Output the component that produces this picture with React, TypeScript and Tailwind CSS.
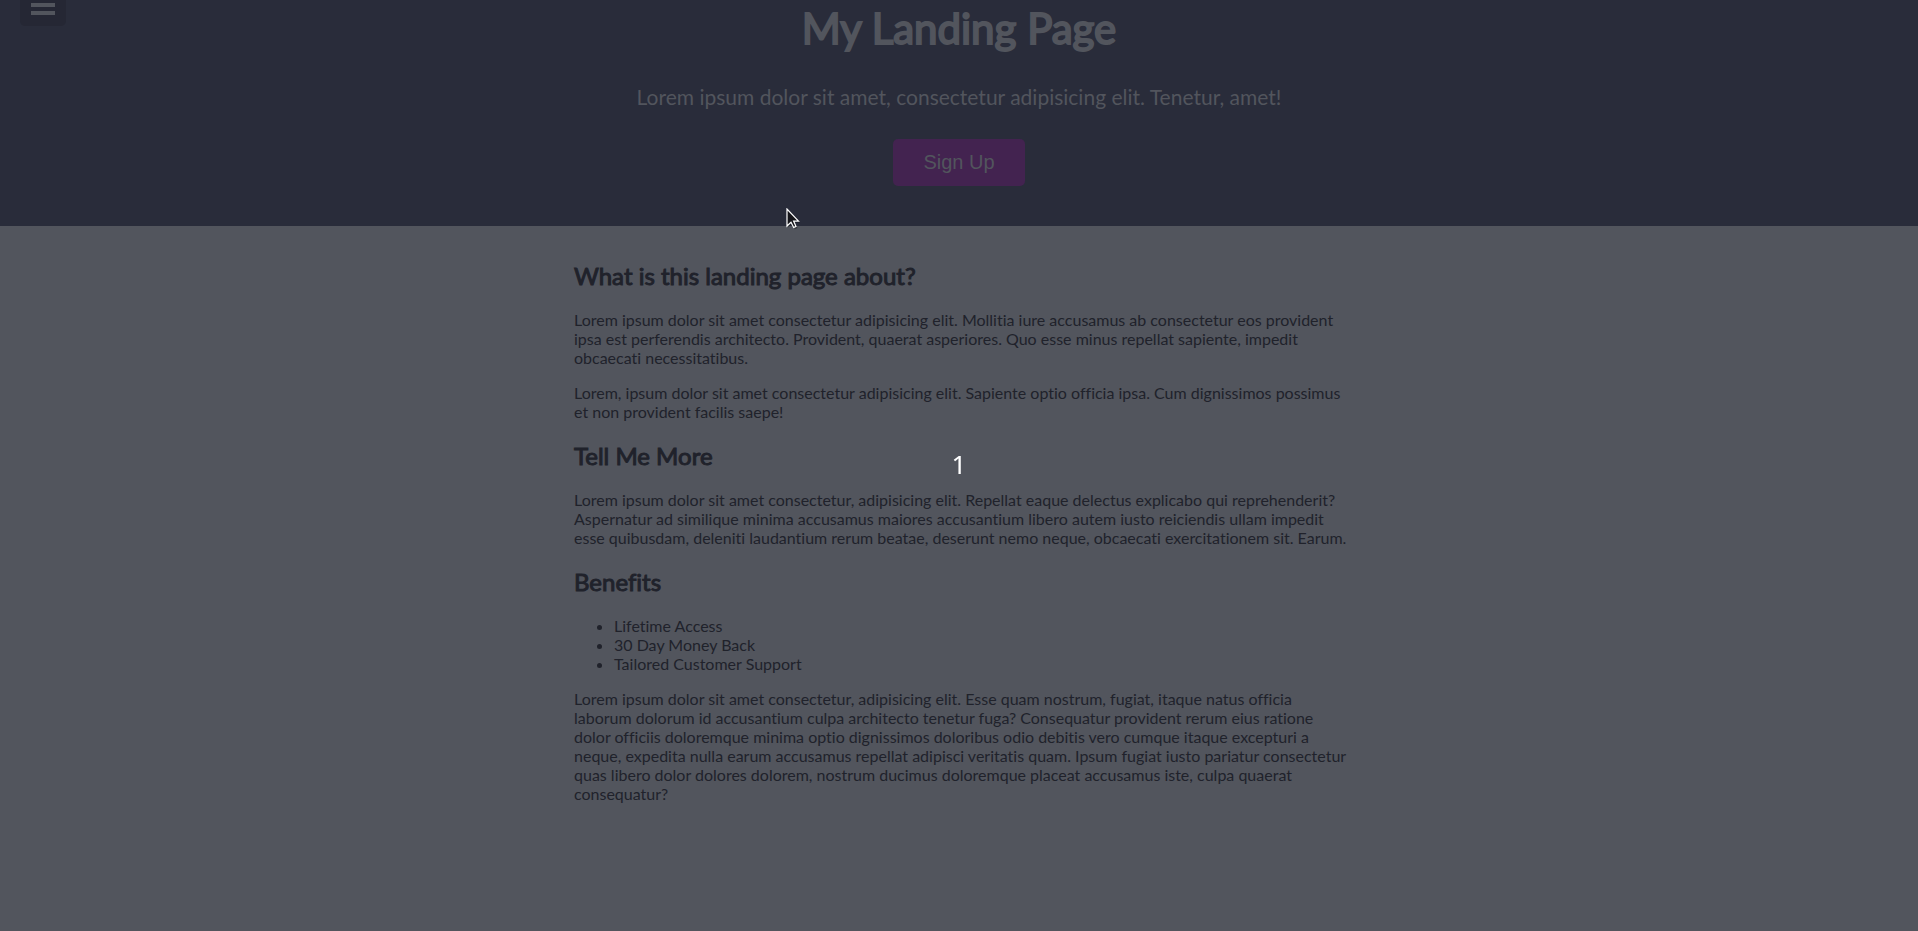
const benefits = ['Lifetime Access', '30 Day Money Back', 'Tailored Customer Support'];

function SectionTitle({ children }: { children: string }) {
  return (
    <h2 className="my-5 text-[24px] leading-[29px] font-normal [-webkit-text-stroke:1px_#20222b]">{children}</h2>
  );
}

function Cursor() {
  return (
    <svg className="pointer-events-none absolute top-[208px] left-[786px]" width="16" height="22" viewBox="0 0 16 22" aria-hidden="true">
      <path d="M1 1v17.5l4-3.8 2.9 5.6 2.6-1.3-2.6-5.5h5.2z" fill="#000" opacity=".35" transform="translate(1 1)" />
      <path d="M1 1v17l4-3.8 2.7 5.3 2.3-1.1-2.4-5.3h4.9z" fill="#15151a" stroke="#fff" strokeWidth="1.2" />
    </svg>
  );
}

export default function App() {
  return (
    <div className="relative min-h-screen overflow-hidden bg-[#52555d] font-['Lato',sans-serif] text-[16px] leading-[19px] text-[#20222b] [font-variant-ligatures:none]">
      <header className="relative flex flex-col items-center bg-[#292c3a] pb-10 text-center text-[#52555d]">
        <button
          type="button"
          aria-label="Toggle navigation"
          className="absolute top-0 left-5 flex h-[26px] w-[46px] flex-col items-center gap-1 rounded-b-[5px] bg-[#252734] pt-[3px]"
        >
          <span className="h-1 w-6 bg-[#52555d]" />
          <span className="h-1 w-6 bg-[#52555d]" />
        </button>
        <h1 className="pt-0.5 text-[42px] leading-[52px] font-normal [-webkit-text-stroke:2px_#52555d]">My Landing Page</h1>
        <p className="my-[30px] text-[21px] leading-[25px]">
          Lorem ipsum dolor sit amet, consectetur adipisicing elit. Tenetur, amet!
        </p>
        <button type="button" className="rounded-[5px] bg-[#432350] px-[30px] py-3 font-['Liberation_Sans',sans-serif] text-[20px] leading-[23px]">
          Sign Up
        </button>
      </header>
      <main className="mx-auto max-w-[800px] pt-[15px] pr-[7px] pl-[15px]">
        <SectionTitle>What is this landing page about?</SectionTitle>
        <p className="my-4">
          Lorem ipsum dolor sit amet consectetur adipisicing elit. Mollitia iure accusamus ab consectetur eos provident
          ipsa est perferendis architecto. Provident, quaerat asperiores. Quo esse minus repellat sapiente, impedit
          obcaecati necessitatibus.
        </p>
        <p className="my-4">
          Lorem, ipsum dolor sit amet consectetur adipisicing elit. Sapiente optio officia ipsa. Cum dignissimos
          possimus et non provident facilis saepe!
        </p>
        <SectionTitle>Tell Me More</SectionTitle>
        <p className="my-4">
          Lorem ipsum dolor sit amet consectetur, adipisicing elit. Repellat eaque delectus explicabo qui reprehenderit?
          Aspernatur ad similique minima accusamus maiores accusantium libero autem iusto reiciendis ullam impedit esse
          quibusdam, deleniti laudantium rerum beatae, deserunt nemo neque, obcaecati exercitationem sit. Earum.
        </p>
        <SectionTitle>Benefits</SectionTitle>
        <ul className="my-4 list-disc pl-10">
          {benefits.map((benefit) => (
            <li key={benefit}>{benefit}</li>
          ))}
        </ul>
        <p className="my-4">
          Lorem ipsum dolor sit amet consectetur, adipisicing elit. Esse quam nostrum, fugiat, itaque natus officia
          laborum dolorum id accusantium culpa architecto tenetur fuga? Consequatur provident rerum eius ratione dolor
          officiis doloremque minima optio dignissimos doloribus odio debitis vero cumque itaque excepturi a neque,
          expedita nulla earum accusamus repellat adipisci veritatis quam. Ipsum fugiat iusto pariatur consectetur quas
          libero dolor dolores dolorem, nostrum ducimus doloremque placeat accusamus iste, culpa quaerat consequatur?
        </p>
      </main>
      <div className="pointer-events-none fixed inset-0 flex items-center justify-center pb-1 font-['Noto_Sans',sans-serif] text-[26px] leading-8 text-white">
        <span>1</span>
      </div>
      <Cursor />
    </div>
  );
}
